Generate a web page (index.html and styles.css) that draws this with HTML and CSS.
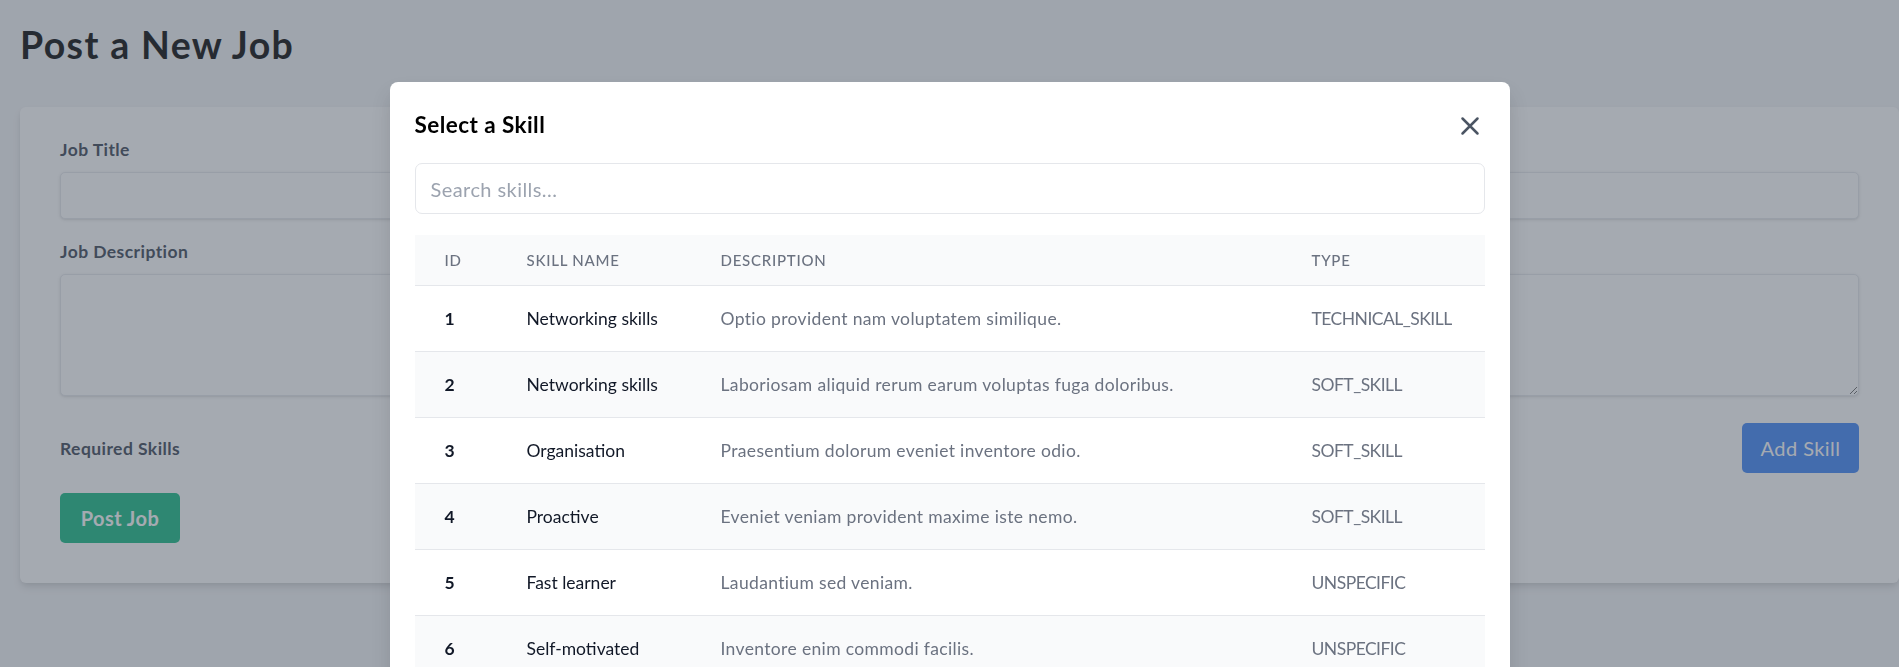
FILE: index.html
```html
<!DOCTYPE html>
<html lang="en">
<head>
<meta charset="utf-8">
<title>Post a New Job</title>
<link rel="stylesheet" href="styles.css">
</head>
<body>
<main class="page">
  <h1 class="page-title">Post a New Job</h1>
  <form class="card">
    <div class="field">
      <label class="label" for="job-title">Job Title</label>
      <input class="input" id="job-title" type="text">
    </div>
    <div class="field field-desc">
      <label class="label" for="job-desc">Job Description</label>
      <textarea class="input textarea" id="job-desc" rows="4"></textarea>
    </div>
    <div class="skills-row">
      <span class="label label-inline">Required Skills</span>
      <button type="button" class="btn btn-blue">Add Skill</button>
    </div>
    <button type="button" class="btn btn-green">Post Job</button>
  </form>
</main>

<div class="overlay">
  <div class="modal">
    <div class="modal-header">
      <h3 class="modal-title">Select a Skill</h3>
      <button type="button" class="close-btn" aria-label="Close">
        <svg viewBox="0 0 24 24" width="30" height="30" fill="none" stroke="currentColor" stroke-width="2" stroke-linecap="round" stroke-linejoin="round"><path d="M6 18L18 6M6 6l12 12"/></svg>
      </button>
    </div>
    <input class="search" type="text" placeholder="Search skills...">
    <table class="skills-table">
      <colgroup>
        <col class="col-id">
        <col class="col-name">
        <col class="col-desc">
        <col class="col-type">
      </colgroup>
      <thead>
        <tr>
          <th>ID</th>
          <th>Skill Name</th>
          <th>Description</th>
          <th>Type</th>
        </tr>
      </thead>
      <tbody>
        <tr><td class="cell-id">1</td><td class="cell-name">Networking skills</td><td class="cell-desc">Optio provident nam voluptatem similique.</td><td class="cell-type">TECHNICAL_SKILL</td></tr>
        <tr><td class="cell-id">2</td><td class="cell-name">Networking skills</td><td class="cell-desc">Laboriosam aliquid rerum earum voluptas fuga doloribus.</td><td class="cell-type">SOFT_SKILL</td></tr>
        <tr><td class="cell-id">3</td><td class="cell-name">Organisation</td><td class="cell-desc">Praesentium dolorum eveniet inventore odio.</td><td class="cell-type">SOFT_SKILL</td></tr>
        <tr><td class="cell-id">4</td><td class="cell-name">Proactive</td><td class="cell-desc">Eveniet veniam provident maxime iste nemo.</td><td class="cell-type">SOFT_SKILL</td></tr>
        <tr><td class="cell-id">5</td><td class="cell-name">Fast learner</td><td class="cell-desc">Laudantium sed veniam.</td><td class="cell-type">UNSPECIFIC</td></tr>
        <tr><td class="cell-id">6</td><td class="cell-name">Self-motivated</td><td class="cell-desc">Inventore enim commodi facilis.</td><td class="cell-type">UNSPECIFIC</td></tr>
      </tbody>
    </table>
  </div>
</div>
</body>
</html>
```

FILE: styles.css
```css
html, body {
  margin: 0;
  height: 100%;
  overflow: hidden;
}

body {
  background: #f3f4f6;
  font-family: Lato, "Open Sans", "Noto Sans", sans-serif;
  letter-spacing: 0.027em;
  color: #000;
}

.page {
  padding: 22px 0 0 20px;
}

.page-title {
  margin: 0 0 40px;
  font-size: 37.5px;
  line-height: 45px;
  font-weight: 700;
  letter-spacing: 0.036em;
}

.card {
  background: #fff;
  border-radius: 6px;
  box-shadow: 0 5px 8px -1px rgba(0, 0, 0, 0.12), 0 2px 5px -1px rgba(0, 0, 0, 0.07);
  padding: 30px 40px 40px;
}

.field {
  margin-bottom: 20px;
}

.field-desc {
  margin-bottom: 27px;
}

.label {
  display: block;
  color: #374151;
  font-size: 17.5px;
  line-height: 25px;
  font-weight: 700;
  margin-bottom: 10px;
}

.input {
  display: block;
  width: 100%;
  box-sizing: border-box;
  height: 47px;
  border: 1px solid #e5e7eb;
  border-radius: 5px;
  box-shadow: 0 1px 4px rgba(0, 0, 0, 0.1), 0 1px 2px rgba(0, 0, 0, 0.06);
  padding: 10px 15px;
  font-family: inherit;
  font-size: 20px;
  line-height: 25px;
  color: #374151;
  background: #fff;
}

.textarea {
  height: 122px;
  resize: vertical;
}

.skills-row {
  display: flex;
  justify-content: space-between;
  align-items: center;
  margin-bottom: 20px;
}

.skills-row .label {
  margin: 0;
}

.btn {
  display: block;
  border: 0;
  border-radius: 5px;
  font-family: inherit;
  letter-spacing: inherit;
  font-size: 20px;
  line-height: 30px;
  height: 50px;
  padding: 10px 0;
  white-space: nowrap;
  text-align: center;
  color: #fff;
}

.btn-blue {
  background: #3b82f6;
  font-weight: 400;
  width: 117px;
}

.btn-green {
  background: #10b981;
  font-weight: 700;
  width: 120px;
}

/* Modal */
.overlay {
  position: fixed;
  inset: 0;
  background: rgba(75, 85, 99, 0.5);
  overflow: hidden;
}

.modal {
  width: 1120px;
  box-sizing: border-box;
  margin: 82px auto 0;
  background: #fff;
  border-radius: 8px;
  padding: 25px;
  box-shadow: 0 12px 20px rgba(0, 0, 0, 0.12);
}

.modal-header {
  display: flex;
  justify-content: space-between;
  align-items: center;
  height: 36px;
  margin-bottom: 20px;
}

.modal-title {
  margin: 0;
  font-size: 22.5px;
  line-height: 36px;
  font-weight: 700;
  color: #000;
}

.close-btn {
  display: flex;
  border: 0;
  background: none;
  padding: 0;
  width: 30px;
  height: 30px;
  margin-top: 2px;
  color: #4b5563;
}

.search {
  display: block;
  width: 100%;
  box-sizing: border-box;
  height: 51px;
  border: 1px solid #e5e7eb;
  border-radius: 7px;
  padding: 10px 15px;
  font-family: inherit;
  letter-spacing: inherit;
  font-size: 20px;
  color: #374151;
  margin-bottom: 21px;
}

.search::placeholder {
  color: #9ca3af;
}

.skills-table {
  width: 100%;
  border-collapse: collapse;
  table-layout: fixed;
}

.col-id { width: 82px; }
.col-name { width: 194px; }
.col-desc { width: 591px; }

.skills-table th {
  background: #f9fafb;
  text-align: left;
  padding: 15px 30px;
  font-size: 15px;
  line-height: 20px;
  font-weight: 500;
  color: #6b7280;
  text-transform: uppercase;
  letter-spacing: 0.05em;
  border-bottom: 1px solid #e5e7eb;
}

.skills-table td {
  padding: 20px 30px;
  font-size: 17.5px;
  line-height: 25px;
  border-bottom: 1px solid #e5e7eb;
  white-space: nowrap;
}

.skills-table tbody tr:nth-child(even) {
  background: #f9fafb;
}

.cell-id {
  font-weight: 700;
  color: #111827;
}

.cell-name {
  color: #111827;
  letter-spacing: 0;
}

.cell-desc {
  color: #6b7280;
  letter-spacing: 0.02em;
}

.cell-type {
  color: #6b7280;
  letter-spacing: -0.03em;
}
```
